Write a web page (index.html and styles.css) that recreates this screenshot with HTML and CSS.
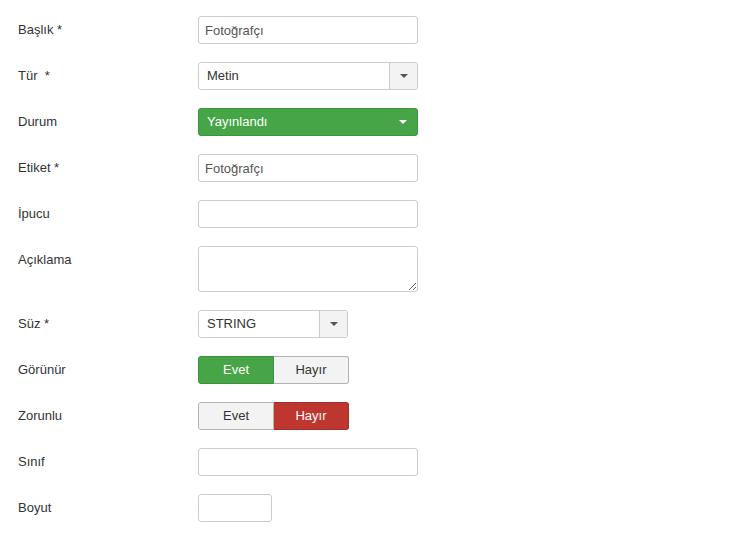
FILE: index.html
```html
<!DOCTYPE html>
<html lang="tr">
<head>
<meta charset="utf-8">
<link rel="stylesheet" href="styles.css">
</head>
<body>
<form class="form">
  <div class="row">
    <label class="label">Başlık *</label>
    <div class="controls"><input class="input" type="text" value="Fotoğrafçı"></div>
  </div>
  <div class="row">
    <label class="label">Tür &nbsp;*</label>
    <div class="controls">
      <div class="select wide"><span class="select-text">Metin</span><span class="select-btn"><i class="caret"></i></span></div>
    </div>
  </div>
  <div class="row">
    <label class="label">Durum</label>
    <div class="controls">
      <div class="select wide success"><span class="select-text">Yayınlandı</span><span class="select-btn"><i class="caret"></i></span></div>
    </div>
  </div>
  <div class="row">
    <label class="label">Etiket *</label>
    <div class="controls"><input class="input" type="text" value="Fotoğrafçı"></div>
  </div>
  <div class="row">
    <label class="label">İpucu</label>
    <div class="controls"><input class="input" type="text" value=""></div>
  </div>
  <div class="row">
    <label class="label">Açıklama</label>
    <div class="controls"><textarea class="textarea"></textarea></div>
  </div>
  <div class="row">
    <label class="label">Süz *</label>
    <div class="controls">
      <div class="select narrow"><span class="select-text">STRING</span><span class="select-btn"><i class="caret"></i></span></div>
    </div>
  </div>
  <div class="row">
    <label class="label">Görünür</label>
    <div class="controls">
      <div class="btn-group"><span class="btn active-yes">Evet</span><span class="btn">Hayır</span></div>
    </div>
  </div>
  <div class="row">
    <label class="label">Zorunlu</label>
    <div class="controls">
      <div class="btn-group"><span class="btn">Evet</span><span class="btn active-no">Hayır</span></div>
    </div>
  </div>
  <div class="row">
    <label class="label">Sınıf</label>
    <div class="controls"><input class="input" type="text" value=""></div>
  </div>
  <div class="row">
    <label class="label">Boyut</label>
    <div class="controls"><input class="input small" type="text" value=""></div>
  </div>
</form>
</body>
</html>
```
FILE: styles.css
```css
* { box-sizing: border-box; }
html, body { margin: 0; padding: 0; background: #fff; }
body {
  font-family: "Liberation Sans", Arial, sans-serif;
  font-size: 13px;
  line-height: 18px;
  color: #333;
}
.form { padding: 16px 0 0 18px; }
.row { display: flex; margin-bottom: 18px; }
.label { width: 180px; padding-top: 5px; color: #333; flex: none; }
.controls { flex: none; }
.input {
  display: block;
  width: 220px;
  height: 28px;
  padding: 4px 6px;
  margin: 0;
  border: 1px solid #ccc;
  border-radius: 3px;
  font-family: inherit;
  font-size: 13px;
  line-height: 18px;
  color: #555;
  background: #fff;
  outline: none;
}
.input.small { width: 74px; }
.textarea {
  display: block;
  width: 220px;
  height: 46px;
  padding: 4px 6px;
  margin: 0;
  border: 1px solid #ccc;
  border-radius: 3px;
  font-family: inherit;
  font-size: 13px;
  color: #555;
  background: #fff;
  resize: both;
  outline: none;
}
.select {
  display: flex;
  height: 28px;
  border: 1px solid #ccc;
  border-radius: 3px;
  background: #fff;
  overflow: hidden;
  color: #333;
}
.select.wide { width: 220px; }
.select.narrow { width: 150px; }
.select-text { flex: 1; padding: 4px 8px; line-height: 18px; }
.select-btn {
  width: 28px;
  flex: none;
  display: flex;
  align-items: center;
  justify-content: center;
  background: #f3f3f3;
  border-left: 1px solid #ccc;
}
.caret {
  display: block;
  width: 0;
  height: 0;
  border-top: 4px solid #555;
  border-left: 4px solid transparent;
  border-right: 4px solid transparent;
}
.select.success {
  background: #46a546;
  border-color: #3f933f;
  color: #fff;
}
.select.success .select-btn { background: transparent; border-left: none; }
.select.success .caret { border-top-color: #fff; }
.btn-group { display: flex; width: 151px; }
.btn {
  flex: none;
  width: 76px;
  height: 28px;
  padding: 4px 0;
  text-align: center;
  line-height: 18px;
  color: #333;
  background: #f3f3f3;
  border: 1px solid #b3b3b3;
}
.btn + .btn { width: 75px; border-left: none; }
.btn:first-child { border-radius: 3px 0 0 3px; }
.btn:last-child { border-radius: 0 3px 3px 0; }
.btn.active-yes { background: #46a546; border-color: #3d8f3d; color: #fff; }
.btn.active-no { background: #bd362f; border-color: #a2302a; color: #fff; }
```
